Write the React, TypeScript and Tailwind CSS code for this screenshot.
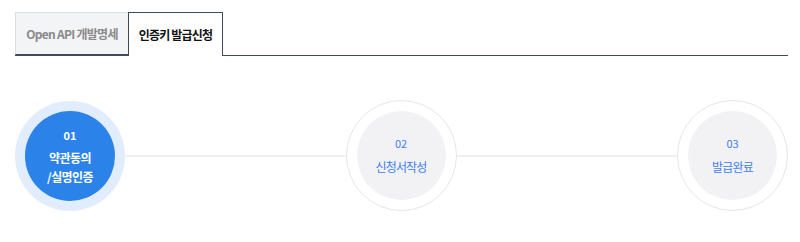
import React from "react";

const steps = [
  { no: "01", label: ["약관동의", "/실명인증"], active: true },
  { no: "02", label: ["신청서작성"], active: false },
  { no: "03", label: ["발급완료"], active: false },
];

const App = () => {
  return (
    <div
      className="w-[800px] h-[242px] bg-white pt-[12px] pl-[15px] pr-[12px]"
      style={{ fontFamily: '"Noto Sans CJK KR", "Noto Sans", sans-serif' }}
    >
      {/* 탭 */}
      <div className="flex border-b border-[#3d4b5f]">
        <div className="w-[113px] h-[43px] flex items-center justify-center bg-[#f3f4f6] border-t border-l border-[#dcdee2] text-[12px] font-bold tracking-[-0.06em] text-[#8a8a8a] -mb-px border-b border-b-[#3d4b5f]">
          Open API 개발명세
        </div>
        <div className="w-[95px] h-[44px] -mb-px flex items-center justify-center bg-white border-t border-l border-r border-[#3d4b5f] text-[12px] font-bold tracking-[-0.07em] text-[#111]">
          인증키 발급신청
        </div>
      </div>

      {/* 단계 */}
      <div className="relative mt-[44px] flex items-center justify-between">
        <div className="absolute left-0 right-0 top-1/2 h-[2px] -translate-y-1/2 bg-[#f0f0f2]" />
        {steps.map((s) =>
          s.active ? (
            <div
              key={s.no}
              className="relative w-[110px] h-[110px] rounded-full bg-[#e1ecfd] flex items-center justify-center"
            >
              <div className="w-[90px] h-[90px] rounded-full bg-[#2b82e9] flex flex-col items-center justify-center text-white font-bold pt-[2px]">
                <div className="text-[11px] leading-[14px] mb-[6px]">{s.no}</div>
                {s.label.map((l) => (
                  <div key={l} className="text-[12px] leading-[19px] tracking-[-0.05em]">
                    {l}
                  </div>
                ))}
              </div>
            </div>
          ) : (
            <div
              key={s.no}
              className="relative w-[111px] h-[111px] rounded-full bg-white border border-[#e6e6e8] flex items-center justify-center"
            >
              <div className="w-[89px] h-[89px] rounded-full bg-[#f2f2f5] flex flex-col items-center justify-center text-[#3f7ff0]">
                <div className="text-[11px] leading-[14px] mb-[8px]">{s.no}</div>
                {s.label.map((l) => (
                  <div key={l} className="text-[12px] leading-[18px] tracking-[-0.07em]">
                    {l}
                  </div>
                ))}
              </div>
            </div>
          )
        )}
      </div>
    </div>
  );
};

export default App;
